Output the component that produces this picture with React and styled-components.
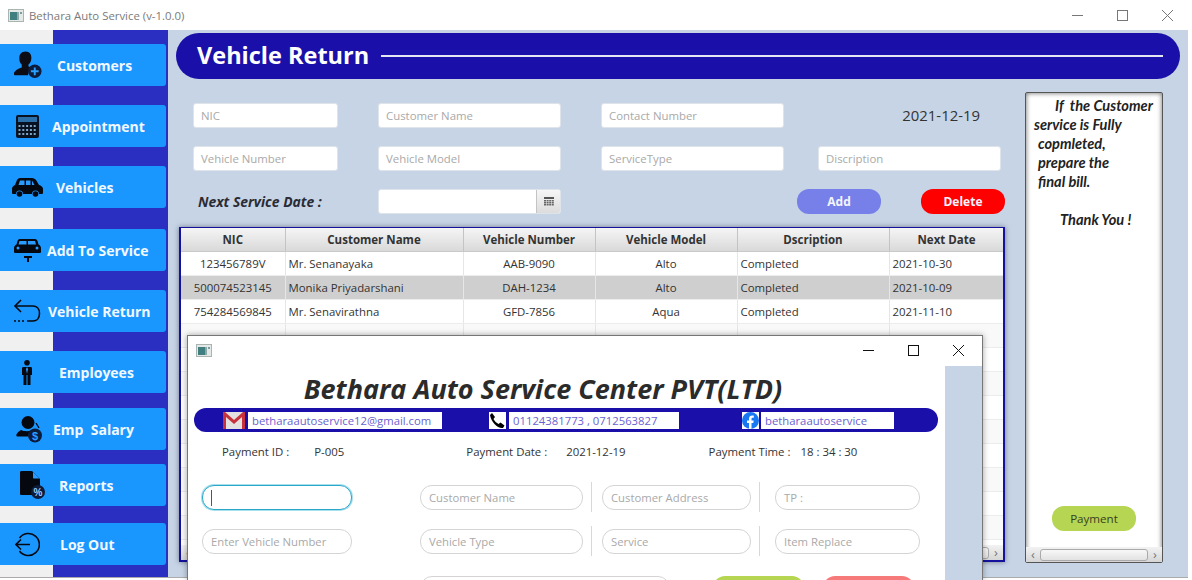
import styled, { createGlobalStyle } from "styled-components";

const UI_FONT = `"Open Sans", "Noto Sans", sans-serif`;

const GlobalStyle = createGlobalStyle`
  html, body { margin: 0; padding: 0; background: #fff; overflow: hidden; }
  * { box-sizing: border-box; }
  body { font-family: ${UI_FONT}; }
`;

/* ---- icons ---- */
const AppIcon = () => (
  <svg width="16" height="13" viewBox="0 0 16 13">
    <rect x="0.5" y="0.5" width="15" height="12" fill="#e4e8e6" stroke="#aab4b0" />
    <rect x="2" y="3" width="7" height="8" fill="#3f7f80" />
    <rect x="9" y="3" width="2" height="8" fill="#8fa9a8" />
    <rect x="12" y="3" width="2" height="2" fill="#7d9c9c" />
  </svg>
);

const Minimize = () => <svg width="13" height="13" viewBox="0 0 13 13"><path d="M1 6.5h11" stroke="currentColor" /></svg>;
const Maximize = () => <svg width="13" height="13" viewBox="0 0 13 13"><rect x="1.5" y="1.5" width="10" height="10" fill="none" stroke="currentColor" /></svg>;
const Close = () => <svg width="13" height="13" viewBox="0 0 13 13"><path d="M1 1l11 11M12 1L1 12" stroke="currentColor" /></svg>;

const GridIcon = () => (
  <svg width="10" height="9" viewBox="0 0 10 9">
    <rect width="10" height="2" fill="#555" />
    {[0, 1, 2].map((r) => [0, 1, 2, 3].map((c) => (
      <rect key={`${r}-${c}`} x={c * 2.6} y={3 + r * 2} width="2" height="1.500" fill="#666" />
    )))}
  </svg>
);

const CustomersIcon = () => (
  <svg width="28" height="28" viewBox="0 0 29 28">
    <path d="M12 0c4 0 6 3 6 6.500 0 3-1 5.500-3 7v2l4 1.500c-3 1.500-4.500 4-4.500 7.500H1c-1.500 0-1.500-1.500-1-2.500 1-2.500 4-4 8-5.500v-3C6 12 5.500 9.500 5.500 6.500 5.500 3 8 0 12 0z" fill="#0c0c14" />
    <circle cx="21.500" cy="20.500" r="7" fill="#0c1c3a" />
    <path d="M21.500 16.500v8M17.500 20.500h8" stroke="#2aa0ff" strokeWidth="2" />
  </svg>
);

const CalcIcon = () => (
  <svg width="23" height="23" viewBox="0 0 23 23">
    <rect width="23" height="23" rx="2" fill="#08111f" />
    <rect x="2" y="2" width="19" height="5" fill="#2a6fa8" />
    {[0, 1, 2, 3, 4].map((c) => [0, 1, 2].map((r) => (
      <rect key={`${c}-${r}`} x={2.5 + c * 3.8} y={10 + r * 4} width="2" height="2" fill="#7fa6c4" />
    )))}
  </svg>
);

const CarIcon = () => (
  <svg width="31" height="19" viewBox="0 0 31 19">
    <path d="M8 0h12c2 0 3 1 4 2l3 5c2 .5 4 2 4 4v3.500c0 1-.5 1.500-1.500 1.500H27a3.500 3.500 0 0 0-7 0H11a3.500 3.500 0 0 0-7 0H1.500C.5 16 0 15.500 0 14.500V11c0-2 1-3 3-4l2-5c.5-1 1.500-2 3-2z" fill="#05080f" />
    <path d="M8 2.500h4.500V7H6.500zM14 2.500h4.500V7H14zM20 2.500l2.500 4.500H20z" fill="#2a9bff" />
    <circle cx="7.500" cy="16" r="2.800" fill="#05080f" />
    <circle cx="23.500" cy="16" r="2.800" fill="#05080f" />
  </svg>
);

const LiftIcon = () => (
  <svg width="27" height="23" viewBox="0 0 27 23">
    <path d="M6 0h14c2 0 3 .5 3.500 2l1 3.500C26 6 27 7.500 27 9v3.500c0 1-.5 1.500-1.500 1.500H1.500C.5 14 0 13.500 0 12.500V9c0-1.500 1-3 2.500-3.500l1-3.500C4 .5 5 0 6 0z" fill="#05080f" />
    <path d="M5.500 2h7v3.500h-8zM14 2h7l1 3.500h-8z" fill="#2a9bff" />
    <circle cx="4" cy="9" r="1.500" fill="#2a9bff" />
    <circle cx="23" cy="9" r="1.500" fill="#2a9bff" />
    <path d="M10 17h8v2h-3v4h-2v-4h-3z" fill="#05080f" />
  </svg>
);

const ReturnIcon = () => (
  <svg width="28" height="24" viewBox="0 0 28 24" fill="none" stroke="#05080f">
    <path d="M8 1L2 7l6 6" strokeWidth="1.600" />
    <path d="M2 7h18c3.500 0 6.500 2.500 6.500 7.500S23.500 22 20 22h-6" strokeWidth="1.600" />
    <path d="M1 22h11" strokeWidth="1.600" strokeDasharray="2 2" />
  </svg>
);

const EmployeeIcon = () => (
  <svg width="10" height="25" viewBox="0 0 10 25">
    <circle cx="5" cy="2.800" r="2.800" fill="#05080f" />
    <path d="M1.500 7h7c1 0 1.500 .5 1.500 1.500V15H8.500v10H5.500V15h-1v10H1.500V15H0V8.500C0 7.500 .5 7 1.500 7z" fill="#05080f" />
    <path d="M5 7l-1 2 1 5 1-5z" fill="#2a9bff" />
  </svg>
);

const SalaryIcon = () => (
  <svg width="27" height="27" viewBox="0 0 27 27">
    <circle cx="12" cy="6.500" r="6.500" fill="#05080f" />
    <path d="M5 14c3 1.500 7 1.500 11 .5-2 1.500-3.500 3.500-4 6H1.500C0 20.500 0 18.500 1 17.500 2 16 3.500 15 5 14z" fill="#05080f" />
    <path d="M20 7l3 5" stroke="#05080f" strokeWidth="1.300" />
    <circle cx="19" cy="19.500" r="7" fill="#0c1c3a" />
    <text x="19" y="23.500" textAnchor="middle" fontSize="11" fontWeight="700" fontFamily="Liberation Sans, sans-serif" fill="#2aa0ff">$</text>
  </svg>
);

const ReportIcon = () => (
  <svg width="25" height="28" viewBox="0 0 25 28">
    <path d="M1.500 0H12l8 8v16H1.500C.5 24 0 23.500 0 22.500v-21C0 .5 .5 0 1.500 0z" fill="#05080f" />
    <path d="M13 1v5.500c0 .7 .3 1 1 1h5.500z" fill="#2a9bff" />
    <circle cx="18" cy="21" r="7" fill="#0c1c3a" />
    <text x="18" y="24.500" textAnchor="middle" fontSize="10" fontWeight="700" fontFamily="Liberation Sans, sans-serif" fill="#9ccfff">%</text>
  </svg>
);

const LogOutIcon = () => (
  <svg width="25" height="25" viewBox="0 0 25 25" fill="none" stroke="#05080f" strokeWidth="1.600">
    <path d="M4.500 6a11 11 0 1 1 0 13" />
    <path d="M15 12.500H1M6 7.500l-5 5 5 5" />
  </svg>
);

const GmailIcon = () => (
  <svg width="22" height="17" viewBox="0 0 22 17">
    <rect width="22" height="17" fill="#e4e2e0" />
    <path d="M0 17V0h2l9 8 9-8h2v17h-3V5l-8 7-8-7v12z" fill="#c8323c" />
  </svg>
);

const PhoneIcon = () => (
  <svg width="17" height="17" viewBox="0 0 17 17">
    <rect width="17" height="17" fill="#fff" />
    <path d="M3 1l3 4-1.500 2c1 2 3 4 5 5l2-1.500 4 3-1.500 2.500C9 17 2 10 1 3z" fill="#000" />
  </svg>
);

const FacebookIcon = () => (
  <svg width="17" height="17" viewBox="0 0 17 17">
    <rect width="17" height="17" fill="#fff" />
    <circle cx="8.500" cy="8.500" r="8.500" fill="#1877f2" />
    <path d="M7 17v-6H5V8.500h2V6.800C7 4.700 8.200 3.500 10.200 3.500c.8 0 1.600.2 1.600.2v2h-1c-1 0-1.300.6-1.300 1.200v1.600h2.200L11.300 11H9.500v6z" fill="#fff" />
  </svg>
);

/* ---- window chrome ---- */
const Page = styled.div`
  position: relative;
  width: 1192px;
  height: 580px;
  overflow: hidden;
  background: #fff;
  display: flex;
  flex-direction: column;
`;

const TitleBar = styled.div`
  flex: 0 0 30px;
  display: flex;
  align-items: center;
  padding: 0 18px 0 8px;
  color: #808080;
`;

const TitleText = styled.span`
  margin-left: 5px;
  margin-right: auto;
  font-size: 11.4px;
  color: #7a7a7a;
`;

const WinControls = styled.div`
  display: flex;
  gap: 32px;
  color: ${(p) => p.$color};
`;

const Body = styled.div`
  width: 1188px;
  height: 548px;
  display: flex;
  border-bottom: 1px solid #aaa;
`;

/* ---- sidebar ---- */
const Sidebar = styled.nav`
  flex: 0 0 168px;
  padding-top: 14px;
  background: linear-gradient(90deg, #f0f0f0 53px, #2a2fc2 53px);
`;

const NavButton = styled.div`
  width: 166px;
  height: 42px;
  margin-top: ${(p) => p.$gap}px;
  display: flex;
  align-items: center;
  padding-left: 7px;
  background: #1a97ff;
  border-radius: 0 3px 3px 0;
`;

const NavIcon = styled.span`
  flex: 0 0 40px;
  display: flex;
  justify-content: center;
  align-items: center;
  transform: translateX(${(p) => p.$dx}px);
`;

const NavLabel = styled.span`
  margin-left: ${(p) => p.$x - 47}px;
  font-size: 14px;
  font-weight: 700;
  color: #f2f8ff;
  white-space: pre;
`;

/* ---- main ---- */
const Main = styled.main`
  flex: 1;
  padding-top: 3px;
  background: #c6d4e6;
`;

const Banner = styled.header`
  height: 46px;
  margin: 0 8px;
  padding: 0 17px 2px 21px;
  display: flex;
  align-items: center;
  gap: 12px;
  background: #1a0fa8;
  border-radius: 23px;
`;

const BannerTitle = styled.h1`
  margin: 0;
  font-size: 23.5px;
  font-weight: 700;
  color: #fff;
  white-space: nowrap;
`;

const BannerLine = styled.span`
  flex: 1;
  height: 2px;
  margin-top: 2px;
  background: #e4e6f4;
`;

const Content = styled.div`
  display: flex;
  align-items: flex-start;
`;

const LeftColumn = styled.section`
  flex: 0 0 857px;
  padding: 24px 0 0 11px;
`;

const FormGrid = styled.div`
  display: grid;
  grid-template-columns: 185px 223px 217px 187px;
  grid-auto-rows: 25px;
  row-gap: 18px;
  padding-left: 14px;
  align-items: center;
`;

const Field = styled.div`
  width: ${(p) => p.$w}px;
  height: 25px;
  padding: 0 7px 1px;
  display: flex;
  align-items: center;
  font-size: 11.4px;
  color: #a9a9a9;
  background: #fff;
  border: 1px solid #dfe3ea;
  border-radius: 3px;
`;

const DateText = styled.span`
  justify-self: end;
  margin-right: 25px;
  margin-bottom: 1px;
  font-size: 14.9px;
  color: #333;
`;

const NextLabel = styled.span`
  padding-left: 5px;
  font-size: 13.9px;
  font-weight: 700;
  font-style: italic;
  color: #2b2b33;
  white-space: nowrap;
`;

const DatePicker = styled.div`
  width: 183px;
  height: 25px;
  display: flex;
  background: #fff;
  border: 1px solid #dfe3ea;
  border-radius: 3px;
  overflow: hidden;
`;

const DateInput = styled.span`
  flex: 1;
`;

const DateButton = styled.span`
  flex: 0 0 24px;
  display: flex;
  align-items: center;
  justify-content: center;
  border-left: 1px solid #c4c4c4;
  background: linear-gradient(#f6f6f6, #dcdcdc);
`;

const Actions = styled.div`
  grid-column: 3 / 5;
  display: flex;
  justify-content: flex-end;
  gap: 40px;
`;

const PillButton = styled.button`
  width: 84px;
  height: 25px;
  padding: 0;
  border: none;
  border-radius: 12px;
  font-family: ${UI_FONT};
  font-size: 12px;
  font-weight: 700;
  color: #f4f4ff;
  background: ${(p) => p.$bg};
`;

const TableFrame = styled.div`
  margin-top: 13px;
  width: 826px;
  height: 335px;
  display: flex;
  flex-direction: column;
  background: #fff;
  border: 2px solid #14129c;
  border-top-width: 1px;
  box-shadow: 0 0 5px rgba(40, 40, 60, 0.55);
  overflow: hidden;
`;

const TableArea = styled.div`
  flex: 1;
  overflow: hidden;
`;

const DataTable = styled.table`
  width: 823px;
  table-layout: fixed;
  border-collapse: collapse;
  font-size: 11.4px;
  color: #333;
`;

const Th = styled.th`
  width: ${(p) => p.$w}px;
  height: 23px;
  padding: 0;
  font-size: 11.5px;
  font-weight: 700;
  color: #333;
  background: linear-gradient(#f5f5f5, #d9d9d9);
  border-right: 1px solid #c4c4c4;
  border-bottom: 1px solid #c9c9c9;
`;

const Row = styled.tr`
  height: 24px;
  background: ${(p) => (p.$selected ? "#cfcfcf" : p.$alt ? "#f9f9f9" : "#fff")};
`;

const Td = styled.td`
  padding: 0 3px;
  text-align: ${(p) => (p.$center ? "center" : "left")};
  border-right: 1px solid #e6e6e6;
  border-bottom: 1px solid #ececec;
  white-space: nowrap;
`;

const ScrollBar = styled.div`
  flex: 0 0 15px;
  display: flex;
  align-items: center;
  justify-content: space-between;
  padding: 0 5px;
  color: #777;
  font-size: 13px;
  line-height: 13px;
  background: linear-gradient(#f2f2f2, #d6d6d6);
`;

const ScrollThumb = styled.span`
  flex: 1;
  height: 12px;
  margin: 0 5px;
  background: linear-gradient(#f8f8f8, #e2e2e2);
  border: 1px solid #aaa;
  border-radius: 3px;
`;

/* ---- info panel ---- */
const InfoPanel = styled.aside`
  flex: 0 0 138px;
  height: 471px;
  margin-top: 13px;
  display: flex;
  flex-direction: column;
  background: #fff;
  border: 1px solid #555;
  border-radius: 2px;
  box-shadow: inset 0 0 5px rgba(0, 0, 0, 0.6);
`;

const InfoText = styled.div`
  padding-top: 3px;
  font-family: "Lato", sans-serif;
  font-size: 14.6px;
  font-weight: 700;
  font-style: italic;
  line-height: 19px;
  color: #222;
`;

const InfoLine = styled.div`
  height: 19px;
  padding-left: ${(p) => p.$x}px;
  white-space: pre;
`;

const PayWrap = styled.div`
  margin-top: auto;
  padding-bottom: 16px;
  display: flex;
  justify-content: center;
`;

const PayButton = styled.button`
  width: 84px;
  height: 25px;
  padding: 0;
  border: none;
  border-radius: 12px;
  font-family: ${UI_FONT};
  font-size: 11.6px;
  color: #3a3f20;
  background: #b5d553;
`;

/* ---- payment dialog ---- */
const Dialog = styled.div`
  position: absolute;
  left: 187px;
  top: 335px;
  width: 796px;
  height: 245px;
  background: #fff;
  border: 1px solid #777;
  border-bottom: none;
  box-shadow: 0 0 6px rgba(0, 0, 0, 0.35);
  overflow: hidden;
`;

const DialogBar = styled.div`
  height: 30px;
  display: flex;
  align-items: center;
  justify-content: space-between;
  padding: 0 17px 2px 8px;
`;

const DialogBody = styled.div`
  display: flex;
`;

const DialogMain = styled.div`
  flex: 0 0 757px;
`;

const DialogStrip = styled.div`
  flex: 1;
  height: 214px;
  background: #c6d4e6;
`;

const CompanyName = styled.h2`
  margin: 6px 0 0;
  height: 36px;
  line-height: 33px;
  padding-right: 47px;
  text-align: center;
  font-size: 27px;
  font-weight: 700;
  font-style: italic;
  color: #2b2b2b;
  white-space: nowrap;
`;

const ContactBar = styled.div`
  height: 24px;
  margin: 0 7px 0 6px;
  padding-left: 29px;
  display: flex;
  align-items: center;
  background: #1a0fa8;
  border-radius: 12px;
`;

const ContactGroup = styled.div`
  display: flex;
  align-items: center;
  gap: ${(p) => p.$gap}px;
  margin-right: ${(p) => p.$after}px;
`;

const ContactBox = styled.div`
  width: ${(p) => p.$w}px;
  height: 17px;
  padding-left: 4px;
  display: flex;
  align-items: center;
  font-size: 11.3px;
  color: #6a5fd0;
  background: #fff;
  white-space: nowrap;
  overflow: hidden;
`;

const InfoRow = styled.div`
  display: flex;
  margin-top: 9px;
  height: 20px;
  align-items: center;
  font-size: 11.4px;
  color: #333;
`;

const InfoItem = styled.span`
  margin-left: ${(p) => p.$ml}px;
  white-space: nowrap;
`;

const InputRows = styled.div`
  display: grid;
  grid-template-columns: 218px 171px 11px 157px 16px 145px;
  grid-auto-rows: 25px;
  row-gap: 19px;
  margin-top: 24px;
  padding-left: 14px;
`;

const PillInput = styled.div`
  width: ${(p) => p.$w}px;
  height: 25px;
  padding: 0 8px;
  display: flex;
  align-items: center;
  font-size: 11.3px;
  color: #a9a9a9;
  background: #fff;
  border: 1px solid ${(p) => (p.$focused ? "#2aa8c8" : "#d4d4d4")};
  border-radius: 12px;
  box-shadow: ${(p) => (p.$focused ? "0 0 0 1px #a8e0ee" : "none")};
`;

const Caret = styled.span`
  width: 1px;
  height: 16px;
  background: #555;
`;

const VDivider = styled.span`
  width: 1px;
  height: 30px;
  margin-top: -3px;
  background: #d8d8d8;
`;

const LastRow = styled.div`
  display: flex;
  margin-top: 22px;
  padding-left: 232px;
`;

const LastButton = styled.span`
  width: ${(p) => p.$w}px;
  height: 25px;
  margin-left: ${(p) => p.$ml}px;
  border-radius: 12px;
  background: ${(p) => p.$bg};
`;

/* ---- data ---- */
const NAV = [
  { label: "Customers", x: 57, gap: 0, dx: 1, icon: <CustomersIcon /> },
  { label: "Appointment", x: 52, gap: 19, dx: 0, icon: <CalcIcon /> },
  { label: "Vehicles", x: 56, gap: 19, dx: 0, icon: <CarIcon /> },
  { label: "Add To Service", x: 47, gap: 21, dx: 0, icon: <LiftIcon /> },
  { label: "Vehicle Return", x: 48, gap: 19, dx: 0, icon: <ReturnIcon /> },
  { label: "Employees", x: 59, gap: 19, dx: 0, icon: <EmployeeIcon /> },
  { label: "Emp  Salary", x: 53, gap: 15, dx: 2, icon: <SalaryIcon /> },
  { label: "Reports", x: 59, gap: 14, dx: 5, icon: <ReportIcon /> },
  { label: "Log Out", x: 60, gap: 17, dx: 0, icon: <LogOutIcon /> },
];

const COLUMNS = [
  ["NIC", 104], ["Customer Name", 178], ["Vehicle Number", 132],
  ["Vehicle Model", 142], ["Dscription", 152], ["Next Date", 115],
];

const ROWS = [
  ["123456789V", "Mr. Senanayaka", "AAB-9090", "Alto", "Completed", "2021-10-30"],
  ["500074523145", "Monika Priyadarshani", "DAH-1234", "Alto", "Completed", "2021-10-09"],
  ["754284569845", "Mr. Senavirathna", "GFD-7856", "Aqua", "Completed", "2021-11-10"],
];

const EMPTY_ROWS = Array.from({ length: 10 }, (_, i) => i);

const INFO_LINES = [
  ["If  the Customer", 29], ["service is Fully", 8], ["copmleted,", 12],
  ["prepare the", 12], ["final bill.", 12], ["\u00a0", 0], ["Thank You !", 34],
];

export default function App() {
  return (
    <Page>
      <GlobalStyle />
      <TitleBar>
        <AppIcon />
        <TitleText>Bethara Auto Service (v-1.0.0)</TitleText>
        <WinControls $color="#777">
          <Minimize /><Maximize /><Close />
        </WinControls>
      </TitleBar>
      <Body>
        <Sidebar>
          {NAV.map((n) => (
            <NavButton key={n.label} $gap={n.gap}>
              <NavIcon $dx={n.dx}>{n.icon}</NavIcon>
              <NavLabel $x={n.x}>{n.label}</NavLabel>
            </NavButton>
          ))}
        </Sidebar>
        <Main>
          <Banner>
            <BannerTitle>Vehicle Return</BannerTitle>
            <BannerLine />
          </Banner>
          <Content>
            <LeftColumn>
              <FormGrid>
                <Field $w={145}>NIC</Field>
                <Field $w={183}>Customer Name</Field>
                <Field $w={183}>Contact Number</Field>
                <DateText>2021-12-19</DateText>
                <Field $w={145}>Vehicle Number</Field>
                <Field $w={183}>Vehicle Model</Field>
                <Field $w={183}>ServiceType</Field>
                <Field $w={183}>Discription</Field>
                <NextLabel>Next Service Date :</NextLabel>
                <DatePicker>
                  <DateInput />
                  <DateButton><GridIcon /></DateButton>
                </DatePicker>
                <Actions>
                  <PillButton $bg="#7780e8">Add</PillButton>
                  <PillButton $bg="#ff0000">Delete</PillButton>
                </Actions>
              </FormGrid>
              <TableFrame>
                <TableArea>
                  <DataTable>
                    <thead>
                      <tr>
                        {COLUMNS.map(([name, w]) => <Th key={name} $w={w}>{name}</Th>)}
                      </tr>
                    </thead>
                    <tbody>
                      {ROWS.map((r, i) => (
                        <Row key={r[0]} $selected={i === 1}>
                          {r.map((cell, c) => (
                            <Td key={c} $center={c === 0 || c === 2 || c === 3}>{cell}</Td>
                          ))}
                        </Row>
                      ))}
                      {EMPTY_ROWS.map((i) => (
                        <Row key={i} $alt={i % 2 === 0}>
                          {COLUMNS.map(([name]) => <Td key={name} />)}
                        </Row>
                      ))}
                    </tbody>
                  </DataTable>
                </TableArea>
                <ScrollBar>‹<ScrollThumb />›</ScrollBar>
              </TableFrame>
            </LeftColumn>
            <InfoPanel>
              <InfoText>
                {INFO_LINES.map(([text, x], i) => <InfoLine key={i} $x={x}>{text}</InfoLine>)}
              </InfoText>
              <PayWrap><PayButton>Payment</PayButton></PayWrap>
              <ScrollBar>‹<ScrollThumb />›</ScrollBar>
            </InfoPanel>
          </Content>
        </Main>
      </Body>

      <Dialog>
        <DialogBar>
          <AppIcon />
          <WinControls $color="#111">
            <Minimize /><Maximize /><Close />
          </WinControls>
        </DialogBar>
        <DialogBody>
          <DialogMain>
            <CompanyName>Bethara Auto Service Center PVT(LTD)</CompanyName>
            <ContactBar>
              <ContactGroup $gap={3} $after={47}>
                <GmailIcon />
                <ContactBox $w={194}>betharaautoservice12@gmail.com</ContactBox>
              </ContactGroup>
              <ContactGroup $gap={3} $after={63}>
                <PhoneIcon />
                <ContactBox $w={170}>01124381773 , 0712563827</ContactBox>
              </ContactGroup>
              <ContactGroup $gap={2} $after={0}>
                <FacebookIcon />
                <ContactBox $w={133}>betharaautoservice</ContactBox>
              </ContactGroup>
            </ContactBar>
            <InfoRow>
              <InfoItem $ml={34}>Payment ID :</InfoItem>
              <InfoItem $ml={25}>P-005</InfoItem>
              <InfoItem $ml={122}>Payment Date :</InfoItem>
              <InfoItem $ml={19}>2021-12-19</InfoItem>
              <InfoItem $ml={83}>Payment Time :</InfoItem>
              <InfoItem $ml={10}>18 : 34 : 30</InfoItem>
            </InfoRow>
            <InputRows>
              <PillInput $w={150} $focused><Caret /></PillInput>
              <PillInput $w={163}>Customer Name</PillInput>
              <VDivider />
              <PillInput $w={149}>Customer Address</PillInput>
              <VDivider />
              <PillInput $w={145}>TP :</PillInput>
              <PillInput $w={150}>Enter Vehicle Number</PillInput>
              <PillInput $w={163}>Vehicle Type</PillInput>
              <VDivider />
              <PillInput $w={149}>Service</PillInput>
              <VDivider />
              <PillInput $w={145}>Item Replace</PillInput>
            </InputRows>
            <LastRow>
              <PillInput $w={250} />
              <LastButton $w={91} $ml={43} $bg="#b5d553" />
              <LastButton $w={91} $ml={19} $bg="#f77a7a" />
            </LastRow>
          </DialogMain>
          <DialogStrip />
        </DialogBody>
      </Dialog>
    </Page>
  );
}
